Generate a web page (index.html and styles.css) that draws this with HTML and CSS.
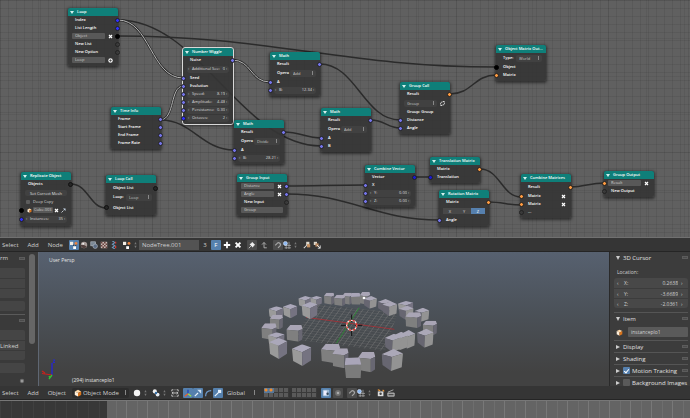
FILE: index.html
```html
<!DOCTYPE html>
<html lang="en">
<head>
<meta charset="utf-8">
<title>Node editor</title>
<link rel="stylesheet" href="styles.css">
</head>
<body>
<svg class="defs" aria-hidden="true">
  <symbol id="i-x" viewBox="0 0 10 10"><path d="M2 2l6 6M8 2l-6 6" stroke="#fff" stroke-width="2.4"/></symbol>
  <symbol id="i-plus" viewBox="0 0 10 10"><path d="M5 1v8M1 5h8" stroke="#fff" stroke-width="2.2"/></symbol>
  <symbol id="i-addc" viewBox="0 0 10 10"><circle cx="5" cy="5" r="4.5" fill="#f2f2f2"/><path d="M5 2.5v5M2.5 5h5" stroke="#333" stroke-width="1.3"/></symbol>
  <symbol id="i-cycle" viewBox="0 0 10 10"><path d="M1 6c0-3 2-4 4-4M9 4c0 3-2 4-4 4" stroke="#eee" stroke-width="1.6" fill="none"/><path d="M5 0h4v4zM5 10H1V6z" fill="#eee"/></symbol>
  <symbol id="i-cube" viewBox="0 0 10 10"><path d="M1 3l4-2 4 2-4 2z" fill="#ffdcae"/><path d="M1 3l4 2v4.500L1 7.500z" fill="#fff0dc"/><path d="M9 3L5 5v4.500l4-2z" fill="#d9741c"/></symbol>
  <symbol id="i-nodes" viewBox="0 0 10 10"><path d="M3 3l3 5M8 4L6 8" stroke="#222" stroke-width="1"/><path d="M0 1h4v4H0z" fill="#f2ede4"/><circle cx="7.500" cy="3" r="1.800" fill="#eb8440"/><path d="M4 6.500h3.500V10H4z" fill="#fff"/></symbol>
  <symbol id="i-mat" viewBox="0 0 10 10"><circle cx="5" cy="5" r="4" fill="#a89c99"/><path d="M1 5a4 4 0 0 0 7.500 2L5 5z" fill="#51403e"/><circle cx="4" cy="3.500" r="1.200" fill="#eee"/></symbol>
  <symbol id="i-comp" viewBox="0 0 10 10"><rect x="1" y="1" width="6" height="5" fill="#7a8794" stroke="#b0b8c0" stroke-width=".8"/><circle cx="6.500" cy="6.500" r="2.800" fill="#5a6c84" stroke="#b0b8c0" stroke-width=".8"/></symbol>
  <symbol id="i-tex" viewBox="0 0 10 10"><rect x="1" y="1" width="8" height="8" fill="#c9b9b4"/><path d="M1 1h2v2H1zM5 1h2v2H5zM3 3h2v2H3zM7 3h2v2H7zM1 5h2v2H1zM5 5h2v2H5zM3 7h2v2H3zM7 7h2v2H7z" fill="#68433f"/></symbol>
  <symbol id="i-anim" viewBox="0 0 10 10"><path d="M3 0l3 2-3 2 3 2-3 2 3 2" stroke="#6f9ac0" stroke-width="1.300" fill="none"/><path d="M7 1v2M7 6v3" stroke="#d63b32" stroke-width="1.600"/></symbol>
  <symbol id="i-ud" viewBox="0 0 4 10"><path d="M2 1l1.500 3h-3zM2 9L.5 6h3z" fill="#777"/></symbol>
  <symbol id="i-pin" viewBox="0 0 10 10"><path d="M1 9l3.500-3.500" stroke="#ddd" stroke-width="1"/><path d="M5 1l4 4-1.500.5-1.500 2.500-4-4 2.500-1.500z" fill="#eee"/></symbol>
  <symbol id="i-up" viewBox="0 0 10 10"><path d="M5 2v6.500h3.500M2.500 4.500L5 1.800l2.500 2.700" stroke="#aaa" stroke-width="1.200" fill="none"/></symbol>
  <symbol id="i-magnet" viewBox="0 0 10 10"><path d="M1.500 5.500L4 3a2.300 2.300 0 0 1 3.500 3L5 8.500" stroke="#a5a5a5" stroke-width="1.500" fill="none"/></symbol>
  <symbol id="i-snap" viewBox="0 0 10 10"><path d="M4 3v7M7.500 1v9M2 5.500h8M2 8.500h8" stroke="#bbb" stroke-width=".8"/><circle cx="3" cy="3" r="2.500" fill="#8cb8f2" stroke="#e5efff" stroke-width=".7"/></symbol>
  <symbol id="i-copy" viewBox="0 0 10 10"><path d="M1 9l4-4" stroke="#ddd" stroke-width="1.300"/><rect x="4" y="1" width="4" height="4" fill="#ded8cc"/><rect x="5" y="4" width="4" height="4" fill="#c28f61"/></symbol>
  <symbol id="i-paste" viewBox="0 0 10 10"><rect x="1" y="1" width="4" height="4" fill="#ded8cc"/><rect x="3" y="3" width="4" height="4" fill="#b98860"/><path d="M5 5l4 4M9 5.500V9H6" stroke="#eee" stroke-width="1.100" fill="none"/></symbol>
  <symbol id="i-ball" viewBox="0 0 10 10"><circle cx="5" cy="5" r="4" fill="#f4f4f4"/></symbol>
  <symbol id="i-pivot" viewBox="0 0 10 10"><circle cx="3.500" cy="3" r="2.600" fill="#f1f1f1"/><circle cx="7" cy="7" r="2.400" fill="#e7edf3"/><circle cx="5" cy="5" r="1.500" fill="#356ea6"/></symbol>
  <symbol id="i-frame" viewBox="0 0 10 10"><path d="M1 3V1h2M7 1h2v2M1 7v2h2M7 9h2V7M1 5h8M4.500 1h1M4.500 9h1M3 3.500L1.500 5 3 6.500M7 3.500L8.500 5 7 6.500" stroke="#ddd" stroke-width="1" fill="none"/></symbol>
  <symbol id="i-axes" viewBox="0 0 10 10"><path d="M5 1v5" stroke="#1d3fbf" stroke-width="1.600"/><path d="M5 6L1 9" stroke="#ef5a28" stroke-width="1.500"/><path d="M5 6l4 3" stroke="#9be04a" stroke-width="1.500"/></symbol>
  <symbol id="i-arrow" viewBox="0 0 10 10"><path d="M1 9l4-4" stroke="#e9f1fa" stroke-width="1.500"/><path d="M4 1h5v5z" fill="#cfe0f2"/></symbol>
  <symbol id="i-arc" viewBox="0 0 10 10"><path d="M2 9c0-4 2-7 7-7" stroke="#6f9acb" stroke-width="1.500" fill="none"/></symbol>
  <symbol id="i-scale" viewBox="0 0 10 10"><path d="M1 9l4.500-4.500" stroke="#eef5fc" stroke-width="1.500"/><rect x="5" y="1" width="4" height="4" fill="#e3eefa"/></symbol>
  <symbol id="i-lock" viewBox="0 0 10 10"><rect x="1" y="1" width="8" height="8" rx="1" fill="#9ab6cf"/><rect x="2" y="2" width="4" height="6" fill="#eef"/><circle cx="7" cy="6" r="1.500" fill="#374a5d"/></symbol>
  <symbol id="i-prop" viewBox="0 0 10 10"><circle cx="5" cy="5" r="3.600" fill="#707070"/><circle cx="5" cy="5" r="1.600" fill="#aaa"/></symbol>
  <symbol id="i-cam" viewBox="0 0 10 10"><rect x="1" y="3" width="7" height="6" fill="#ddd"/><circle cx="4.500" cy="6" r="1.500" fill="#444"/><path d="M1 1l3 1M7 1l2 2" stroke="#f39b3a" stroke-width="1.500"/></symbol>
  <symbol id="i-clap" viewBox="0 0 10 10"><path d="M1 5h8v4H1zM1 4l7-3" fill="#888" stroke="#ccc" stroke-width=".9"/><path d="M2 7h6" stroke="#333"/></symbol>
</svg>

<main class="screen">
  <section class="canvas">
    <svg class="links" aria-hidden="true">
      <g class="dark">
        <path d="M118 20C200 20 240 145 321 146"/>
        <path d="M118 36C270 36 345 67 496 67"/>
        <path d="M161 120C192 120 202 150 234 150"/>
        <path d="M284 132C300 132 306 138 321 138"/>
        <path d="M320 64C356 64 364 120 400 120"/>
        <path d="M371 120C384 120 388 128 400 128"/>
        <path d="M450 94C472 94 474 75 496 75"/>
        <path d="M71 184C88 184 90 208 106 208"/>
        <path d="M287 186C315 186 335 185 365 185"/>
        <path d="M287 194C350 194 376 220 439 220"/>
        <path d="M415 177L430 177"/>
        <path d="M480 169C500 169 502 197 521 197"/>
        <path d="M489 202C502 202 508 205 521 205"/>
        <path d="M571 187C584 187 590 183 604 183"/>
      </g>
      <g class="lit">
        <path d="M118 20C150 20 151 78 183 78"/>
        <path d="M161 120C175 118 170 87 183 86"/>
        <path d="M232 60C252 60 250 82 270 82"/>
      </g>
      <g class="core">
        <path d="M118 20C150 20 151 78 183 78"/>
        <path d="M161 120C175 118 170 87 183 86"/>
        <path d="M232 60C252 60 250 82 270 82"/>
      </g>
    </svg>

    <article class="node n-loop">
      <h2>Loop</h2>
      <div class="row">Index<i class="sock out int"></i></div>
      <div class="row">List Length<i class="sock out int"></i></div>
      <div class="row field"><input value="Object" aria-label="Object name"><button aria-label="Remove object"><svg><use href="#i-x"/></svg></button><i class="sock out obj"></i></div>
      <div class="row">New List<i class="sock out none"></i></div>
      <div class="row">New Option<i class="sock out none"></i></div>
      <div class="row field"><input value="Loop" aria-label="Loop name"><button aria-label="Add call"><svg><use href="#i-addc"/></svg></button></div>
    </article>

    <article class="node active n-wiggle">
      <h2>Number Wiggle</h2>
      <div class="row">Noise<i class="sock out num"></i></div>
      <div class="row tall"><label class="slider">Additional See:<input value="0"></label></div>
      <div class="row">Seed<i class="sock in num"></i></div>
      <div class="row">Evolution<i class="sock in num"></i></div>
      <div class="row"><label class="slider">Speed:<input value="8.19"></label><i class="sock in num"></i></div>
      <div class="row"><label class="slider">Amplitude:<input value="4.48"></label><i class="sock in num"></i></div>
      <div class="row"><label class="slider">Persistance:<input value="0.30"></label><i class="sock in num"></i></div>
      <div class="row"><label class="slider">Octaves:<input value="2"></label><i class="sock in int"></i></div>
    </article>

    <article class="node n-time">
      <h2>Time Info</h2>
      <div class="row">Frame<i class="sock out num"></i></div>
      <div class="row">Start Frame<i class="sock out num"></i></div>
      <div class="row">End Frame<i class="sock out num"></i></div>
      <div class="row">Frame Rate<i class="sock out num"></i></div>
    </article>

    <article class="node n-math1">
      <h2>Math</h2>
      <div class="row">Result<i class="sock out num"></i></div>
      <div class="row tall"><label class="pick">Opera<select><option>Add</option></select></label></div>
      <div class="row">A<i class="sock in num"></i></div>
      <div class="row"><label class="slider">B:<input value="12.34"></label><i class="sock in num"></i></div>
    </article>

    <article class="node n-math2">
      <h2>Math</h2>
      <div class="row">Result<i class="sock out num"></i></div>
      <div class="row tall"><label class="pick">Opera<select><option>Divide</option></select></label></div>
      <div class="row">A<i class="sock in num"></i></div>
      <div class="row"><label class="slider">B:<input value="28.21"></label><i class="sock in num"></i></div>
    </article>

    <article class="node n-math3">
      <h2>Math</h2>
      <div class="row">Result<i class="sock out num"></i></div>
      <div class="row tall"><label class="pick">Opera<select><option>Add</option></select></label></div>
      <div class="row">A<i class="sock in num"></i></div>
      <div class="row">B<i class="sock in num"></i></div>
    </article>

    <article class="node n-call">
      <h2>Group Call</h2>
      <div class="row">Result<i class="sock out mat"></i></div>
      <div class="row tall field"><select aria-label="Group"><option>Group</option></select><button aria-label="Refresh"><svg><use href="#i-cycle"/></svg></button></div>
      <div class="row">Group: Group</div>
      <div class="row">Distance<i class="sock in num"></i></div>
      <div class="row">Angle<i class="sock in num"></i></div>
    </article>

    <article class="node n-omo">
      <h2>Object Matrix Out...</h2>
      <div class="row tall"><label class="pick">Type:<select><option>World</option></select></label></div>
      <div class="row">Object<i class="sock in obj"></i></div>
      <div class="row">Matrix<i class="sock in mat"></i></div>
    </article>

    <article class="node n-repl">
      <h2>Replicate Object</h2>
      <div class="row">Objects<i class="sock out list"></i></div>
      <div class="row tall field"><button class="wide">Set Correct Mesh</button></div>
      <div class="row field"><label class="tick"><input type="checkbox">Deep Copy</label></div>
      <div class="row field cube"><svg><use href="#i-cube"/></svg><input value="Cube.003" aria-label="Source object"><button aria-label="Clear"><svg><use href="#i-x"/></svg></button><button aria-label="Pick"><svg><use href="#i-arrow"/></svg></button><i class="sock in obj"></i></div>
      <div class="row tall"><label class="slider">Instances:<input value="35"></label><i class="sock in int"></i></div>
    </article>

    <article class="node n-lcall">
      <h2>Loop Call</h2>
      <div class="row tall">Object List<i class="sock out list"></i></div>
      <div class="row"><label class="pick">Loop:<select><option>Loop</option></select></label></div>
      <div class="row last">Object List<i class="sock in list"></i></div>
    </article>

    <article class="node n-gin">
      <h2>Group Input</h2>
      <div class="row field"><input value="Distance" aria-label="First input"><button aria-label="Remove first input"><svg><use href="#i-x"/></svg></button><i class="sock out num"></i></div>
      <div class="row field"><input value="Angle" aria-label="Second input"><button aria-label="Remove second input"><svg><use href="#i-x"/></svg></button><i class="sock out num"></i></div>
      <div class="row">New Input<i class="sock out none"></i></div>
      <div class="row field"><input value="Group" aria-label="Group name"></div>
    </article>

    <article class="node n-cvec">
      <h2>Combine Vector</h2>
      <div class="row">Vector<i class="sock out vec"></i></div>
      <div class="row">X<i class="sock in num"></i></div>
      <div class="row"><label class="slider">Y:<input value="0.00"></label><i class="sock in num"></i></div>
      <div class="row"><label class="slider">Z:<input value="0.00"></label><i class="sock in num"></i></div>
    </article>

    <article class="node n-trans">
      <h2>Translation Matrix</h2>
      <div class="row">Matrix<i class="sock out mat"></i></div>
      <div class="row">Translation<i class="sock in vec"></i></div>
    </article>

    <article class="node n-rot">
      <h2>Rotation Matrix</h2>
      <div class="row">Matrix<i class="sock out mat"></i></div>
      <div class="row tall field axis"><button>X</button><button>Y</button><button class="on">Z</button></div>
      <div class="row">Angle<i class="sock in num"></i></div>
    </article>

    <article class="node n-cmat">
      <h2>Combine Matrices</h2>
      <div class="row tall">Result<i class="sock out mat"></i></div>
      <div class="row split">Matrix<button aria-label="Remove first matrix"><svg><use href="#i-x"/></svg></button><i class="sock in mat"></i></div>
      <div class="row split">Matrix<button aria-label="Remove second matrix"><svg><use href="#i-x"/></svg></button><i class="sock in mat"></i></div>
      <div class="row">...<i class="sock in none"></i></div>
    </article>

    <article class="node n-gout">
      <h2>Group Output</h2>
      <div class="row field"><input value="Result" aria-label="Output name"><button aria-label="Remove output"><svg><use href="#i-x"/></svg></button><i class="sock in mat"></i></div>
      <div class="row">New Output<i class="sock in none"></i></div>
    </article>
  </section>

  <header class="bar">
    <nav><button>Select</button><button>Add</button><button>Node</button></nav>
    <div class="icons">
      <button class="on" aria-label="Animation nodes"><svg><use href="#i-nodes"/></svg></button>
      <button aria-label="Material nodes"><svg><use href="#i-mat"/></svg></button>
      <button aria-label="Compositing nodes"><svg><use href="#i-comp"/></svg></button>
      <button aria-label="Texture nodes"><svg><use href="#i-tex"/></svg></button>
      <button aria-label="Sequence nodes"><svg><use href="#i-anim"/></svg></button>
    </div>
    <div class="id">
      <button class="browse" aria-label="Browse trees"><svg><use href="#i-nodes"/></svg><svg class="ud"><use href="#i-ud"/></svg></button>
      <input value="NodeTree.001" aria-label="Tree name">
      <button>3</button><button class="on">F</button>
      <button aria-label="New tree"><svg><use href="#i-plus"/></svg></button>
      <button aria-label="Unlink"><svg><use href="#i-x"/></svg></button>
    </div>
    <div class="icons tools">
      <button class="lite" aria-label="Pin"><svg><use href="#i-pin"/></svg></button>
      <button aria-label="Parent tree"><svg><use href="#i-up"/></svg></button>
    </div>
    <div class="icons">
      <button class="lite" aria-label="Snap"><svg><use href="#i-magnet"/></svg></button>
      <button class="browse" aria-label="Snap element"><svg><use href="#i-snap"/></svg><svg class="ud"><use href="#i-ud"/></svg></button>
    </div>
    <div class="icons">
      <button aria-label="Copy"><svg><use href="#i-copy"/></svg></button>
      <button aria-label="Paste"><svg><use href="#i-paste"/></svg></button>
    </div>
  </header>

  <section class="middle">
    <aside class="shelf">
      <div class="shelf-body">
        <div class="shelf-head">rm<i class="grip"></i></div>
        <div class="stack"><i></i><i></i><i></i></div>
        <div class="stack"><i></i></div>
        <div class="shelf-head second"><i class="grip"></i></div>
        <div class="stack"><i></i><i>Linked</i><i></i></div>
        <div class="stack"><i></i></div>
        <svg class="plus"><use href="#i-prop"/></svg>
      </div>
      <div class="scroll"></div>
    </aside>

    <div class="view">
      <p>User Persp</p>
      <svg class="scene" viewBox="0 0 570 134" preserveAspectRatio="xMidYMid meet" aria-hidden="true">
        <defs>
          <pattern id="floor" width="10" height="10" patternUnits="userSpaceOnUse" patternTransform="matrix(1.6 .22 -.52 .72 172 119)">
            <path d="M0 0h10M0 0v10" stroke="#7c7c7c" stroke-width="1.700" fill="none"/>
          </pattern>
          <symbol id="ca" viewBox="0 0 50 60" preserveAspectRatio="none"><path d="M0 12L26 0l24 9-24 13z" fill="#aba8ba"/><path d="M0 12l26 10 1 38L3 46z" fill="#9a9a9a"/><path d="M50 9L26 22l1 38 22-15z" fill="#757381"/></symbol>
          <symbol id="cb" viewBox="0 0 50 60" preserveAspectRatio="none"><path d="M0 17L12 0h34l4 14-14 7z" fill="#a9a5b5"/><path d="M0 17l37 4v39L2 53z" fill="#7f7f7f"/><path d="M50 14l-13 7v39l12-8z" fill="#686772"/></symbol>
          <symbol id="cc" viewBox="0 0 50 60" preserveAspectRatio="none"><path d="M3 2L44 0l6 21-50 1z" fill="#a9a5b8"/><path d="M0 22l50-1-2 39-44-1z" fill="#7b7b7b"/></symbol>
          <symbol id="cd" viewBox="0 0 50 60" preserveAspectRatio="none"><path d="M0 14L28 0l22 12-26 10z" fill="#aba8b8"/><path d="M0 14l24 8-2 38L2 44z" fill="#676671"/><path d="M50 12L24 22l-2 38 25-10z" fill="#939393"/></symbol>
        </defs>
        <g transform="translate(212 28) scale(.3333)">
          <use href="#ca" x="142" y="48" width="40" height="36"/>
          <use href="#ca" x="178" y="48" width="35" height="30"/>
          <use href="#cb" x="219" y="38" width="31" height="36"/>
          <use href="#cb" x="274" y="38" width="30" height="36"/>
          <use href="#cc" x="300" y="38" width="29" height="36"/>
          <use href="#cb" x="326" y="36" width="32" height="38"/>
          <use href="#cb" x="249" y="44" width="34" height="34"/>
          <path d="M190 72L440 98 402 213 128 178z" fill="#474b4e" fill-opacity=".4"/>
          <path d="M190 72L440 98 402 213 128 178z" fill="url(#floor)"/>
          <path d="M165 112l265 36" stroke="#a32d33" stroke-width="2.500"/>
          <path d="M325 83l-69 107" stroke="#2b9233" stroke-width="2.500"/>
          <use href="#cd" x="338" y="48" width="40" height="38"/>
          <use href="#cd" x="380" y="57" width="42" height="38"/>
          <use href="#cd" x="394" y="64" width="45" height="44"/>
          <use href="#ca" x="441" y="63" width="46" height="36"/>
          <use href="#cd" x="444" y="77" width="44" height="42"/>
          <use href="#cd" x="491" y="83" width="44" height="42"/>
          <use href="#cb" x="463" y="97" width="48" height="47"/>
          <use href="#cb" x="515" y="122" width="43" height="44"/>
          <use href="#ca" x="152" y="66" width="48" height="52"/>
          <use href="#ca" x="96" y="72" width="43" height="43"/>
          <use href="#ca" x="53" y="79" width="44" height="40"/>
          <use href="#cb" x="56" y="104" width="40" height="44"/>
          <use href="#cb" x="31" y="130" width="46" height="50"/>
          <use href="#cb" x="106" y="135" width="49" height="50"/>
          <use href="#ca" x="51" y="157" width="50" height="44"/>
          <use href="#ca" x="54" y="174" width="55" height="63"/>
          <use href="#ca" x="123" y="193" width="58" height="65"/>
          <use href="#cd" x="498" y="146" width="50" height="57"/>
          <use href="#cd" x="448" y="150" width="45" height="56"/>
          <use href="#cd" x="424" y="155" width="48" height="56"/>
          <use href="#cd" x="401" y="161" width="50" height="55"/>
          <use href="#cd" x="392" y="207" width="64" height="66"/>
          <use href="#cb" x="210" y="192" width="58" height="58"/>
          <use href="#cb" x="244" y="205" width="49" height="60"/>
          <use href="#cb" x="321" y="216" width="52" height="61"/>
          <use href="#cc" x="281" y="232" width="50" height="63"/>
          <path d="M302 104v22M302 146v22M270 136h22M312 136h22" stroke="#111" stroke-width="3"/>
          <circle cx="302" cy="136" r="15" fill="none" stroke="#f1f1f1" stroke-width="4"/>
          <circle cx="302" cy="136" r="15" fill="none" stroke="#e0332c" stroke-width="4" stroke-dasharray="7 5"/>
          <circle cx="339" cy="54" r="4" fill="#fff"/>
        </g>
        <path d="M13 123V111" stroke="#2426d8" stroke-width="1.300"/>
        <path d="M13 123L3 121.500M3 119l3 2" stroke="#c9211d" stroke-width="1.200"/>
        <path d="M13 123l-3 4M10 124l1 2" stroke="#30c431" stroke-width="1.300"/>
        <path d="M14 108h2l-2 2.500h2" stroke="#2426d8" stroke-width=".9" fill="none"/>
      </svg>
      <p class="foot">(294) instanceplo1</p>
    </div>

    <aside class="props">
      <section>
        <h3 class="open">3D Cursor<i class="grip"></i></h3>
        <p>Location:</p>
        <div class="coords">
          <label>X:<input value="0.2638"></label>
          <label>Y:<input value="-3.6689"></label>
          <label>Z:<input value="-2.0361"></label>
        </div>
      </section>
      <section>
        <h3 class="open">Item<i class="grip"></i></h3>
        <div class="item"><svg><use href="#i-cube"/></svg><input value="instanceplo1" aria-label="Item name"></div>
      </section>
      <section><h3>Display<i class="grip"></i></h3></section>
      <section><h3>Shading<i class="grip"></i></h3></section>
      <section><h3><label><input type="checkbox" checked>Motion Tracking</label><i class="grip"></i></h3></section>
      <section><h3><label><input type="checkbox">Background Images</label></h3></section>
    </aside>
  </section>

  <header class="bar lower">
    <nav><button>Select</button><button>Add</button><button>Object</button></nav>
    <label class="mode"><svg><use href="#i-cube"/></svg><select aria-label="Mode"><option>Object Mode</option></select></label>
    <div class="icons spaced">
      <button class="browse" aria-label="Shading"><svg><use href="#i-ball"/></svg><svg class="ud"><use href="#i-ud"/></svg></button>
      <button class="browse" aria-label="Pivot"><svg><use href="#i-pivot"/></svg><svg class="ud"><use href="#i-ud"/></svg></button>
    </div>
    <button aria-label="Centers only"><svg><use href="#i-frame"/></svg></button>
    <div class="icons">
      <button class="on" aria-label="Manipulator"><svg><use href="#i-axes"/></svg></button>
      <button class="on" aria-label="Translate"><svg><use href="#i-arrow"/></svg></button>
      <button aria-label="Rotate"><svg><use href="#i-arc"/></svg></button>
      <button class="on" aria-label="Scale"><svg><use href="#i-scale"/></svg></button>
      <select aria-label="Orientation"><option>Global</option></select>
    </div>
    <div class="layers"><i class="used"></i><i></i></div>
    <div class="icons tools">
      <button class="on" aria-label="Lock camera"><svg><use href="#i-lock"/></svg></button>
      <button class="lite" aria-label="Proportional edit"><svg><use href="#i-prop"/></svg></button>
    </div>
    <div class="icons">
      <button class="lite" aria-label="Snap"><svg><use href="#i-magnet"/></svg></button>
      <button class="browse" aria-label="Snap element"><svg><use href="#i-snap"/></svg><svg class="ud"><use href="#i-ud"/></svg></button>
    </div>
    <div class="icons">
      <button aria-label="Render still"><svg><use href="#i-cam"/></svg></button>
      <button aria-label="Render animation"><svg><use href="#i-clap"/></svg></button>
    </div>
  </header>
  <section class="timeline"><div class="before"></div></section>
</main>
</body>
</html>
```
FILE: styles.css
```css
* { box-sizing: border-box; }
body {
  margin: 0;
  background: #303030;
  color: #d0d0d0;
  font: 6px/8px "Open Sans", "Noto Sans", sans-serif;
}
h2, h3, p { margin: 0; font: inherit; }
i { font-style: normal; }
button, input, select {
  margin: 0; padding: 0; border: 0; background: none;
  color: inherit; font: inherit; appearance: none; min-width: 0;
}
.defs { position: absolute; width: 0; height: 0; }

.screen {
  display: grid;
  grid-template-rows: 1fr auto auto auto 18px;
  min-height: 100vh;
}

/* node canvas */
.canvas {
  position: relative;
  overflow: hidden;
  border-bottom: 1px solid #707070;
  background:
    repeating-linear-gradient(90deg, #0000000f 0 1px, transparent 1px 38px),
    repeating-linear-gradient(#0000000f 0 1px, transparent 1px 38px),
    repeating-linear-gradient(90deg, #00000012 0 1px, transparent 1px 8px),
    repeating-linear-gradient(#00000012 0 1px, transparent 1px 8px),
    #606060;
}
.links { position: absolute; inset: 0; width: 100%; height: 100%; fill: none; }
.dark { stroke: #2b2b2b; stroke-width: 1.5; }
.lit { stroke: #2b2b2b; stroke-width: 2.4; }
.core { stroke: #b5b5b5; stroke-width: 1; }

.node {
  position: absolute;
  width: 50px;
  padding-bottom: 2px;
  border-radius: 2px;
  background: #353535e8;
  box-shadow: 0 1px 3px 1px #00000080;
  color: #fff;
  font-size: 4px;
  font-weight: 600;
  line-height: 8px;
}
.node.active { outline: 1px solid #d8d8d8; }
.node h2 {
  display: flex;
  align-items: center;
  gap: 3px;
  height: 8px;
  padding-left: 2px;
  border-radius: 2px 2px 0 0;
  background: #0f7f79;
  white-space: nowrap;
}
.node h2::before {
  content: "";
  border: 2px solid transparent;
  border-top: 3px solid #d5f0ee;
  border-bottom: 0;
}
.row {
  position: relative;
  display: flex;
  align-items: center;
  height: 8px;
  padding: 0 4px 0 7px;
}
.row.tall { height: 10px; }
.row.last { height: 12px; padding-top: 2px; }
.row:has(.slider), .row.field { padding-left: 4px; }
.row svg { display: block; width: 5px; height: 5px; }
.field { gap: 2px; }
.row input, .row select, .slider, .tick, .wide, .axis { font-weight: 400; }
.field > input {
  flex: 1;
  height: 6px;
  padding-left: 3px;
  border-radius: 1px;
  background: #585858;
  color: #cfcfcf;
}
.field > button, .split > button {
  display: grid;
  place-items: center;
  width: 7px;
  height: 6px;
}
.field > button.wide { flex: 1; border-radius: 2px; background: #414141; color: #e0e0e0; }
.split { justify-content: space-between; }
.slider {
  display: flex;
  flex: 1;
  align-items: center;
  height: 7px;
  border-radius: 3px;
  background: #414141;
  color: #dcdcdc;
  white-space: nowrap;
}
.slider::before { content: "‹"; width: 4px; padding-left: 1px; }
.slider::after { content: "›"; width: 3px; padding-left: 1px; }
.slider input { flex: 1; width: 0; text-align: right; }
.pick { display: flex; flex: 1; align-items: center; justify-content: space-between; white-space: nowrap; }
.node select {
  width: 26px;
  height: 7px;
  padding-left: 3px;
  border-radius: 2px;
  background: linear-gradient(#888, #888) right 3px center / 1px 4px no-repeat, #414141;
  color: #c4c4c4;
}
.field > select { flex: 1; }
.tick { display: flex; align-items: center; gap: 3px; padding-left: 1px; color: #d8d8d8; }
.tick input { width: 4px; height: 4px; border-radius: 1px; background: #5c5c5c; }
.row.cube { gap: 0; }
.cube > svg { margin: 0 1px 0 2px; }
.cube > input { padding-left: 1px; }
.row.axis { gap: 0; }
.axis > button { flex: 1; background: #484848; color: #d0d0d0; }
.axis > button.on { background: #5680ae; color: #fff; }

.sock {
  position: absolute;
  top: 50%;
  width: 5px;
  height: 5px;
  margin-top: -2px;
  border: 1px solid #222;
  border-radius: 50%;
}
.in { left: -2px; }
.out { right: -2px; }
.num { background: #7474ea; }
.int { background: #2f2fff; }
.vec { background: #1a1ad0; }
.mat { background: #ff9b40; }
.obj { background: #000; border-color: #000; }
.list { background: #262626; border-color: #111; }

.n-loop { left: 68px; top: 8px; }
.n-wiggle { left: 183px; top: 48px; }
.n-time { left: 111px; top: 107px; }
.n-math1 { left: 270px; top: 52px; }
.n-math2 { left: 234px; top: 120px; }
.n-math3 { left: 321px; top: 108px; }
.n-call { left: 400px; top: 82px; }
.n-omo { left: 496px; top: 45px; }
.n-repl { left: 21px; top: 172px; }
.n-lcall { left: 106px; top: 175px; }
.n-gin { left: 237px; top: 174px; }
.n-cvec { left: 365px; top: 165px; }
.n-trans { left: 430px; top: 157px; }
.n-rot { left: 439px; top: 190px; }
.n-cmat { left: 521px; top: 174px; }
.n-gout { left: 604px; top: 171px; }

/* editor headers */
.bar {
  display: flex;
  align-items: center;
  gap: 4px;
  height: 14px;
  padding: 0 2px;
  border-bottom: 1px solid #252525;
  background: #353535;
}
.bar nav { display: flex; gap: 9px; margin-right: 2px; }
.bar svg { display: block; width: 8px; height: 8px; }
.bar svg.ud { width: 3px; }
.bar button { white-space: nowrap; }
.icons, .id { display: flex; align-items: center; }
.id { gap: 1px; }
.bar .icons button, .id button {
  display: flex;
  align-items: center;
  justify-content: center;
  width: 10px;
  height: 10px;
  border-radius: 1px;
}
.bar button.browse { width: 15px; gap: 3px; }
.bar button.on { background: #5580ad; color: #fff; }
.bar button.lite { background: #4c4c4c; }
.tools { gap: 2px; }
.spaced { gap: 4px; }
.id input { width: 60px; height: 10px; padding-left: 3px; background: #535353; }
.mode { display: flex; align-items: center; gap: 1px; width: 57px; padding-left: 2px; border-radius: 2px; background: #2c2c2c; }
.mode select { flex: 1; height: 10px; background: linear-gradient(#888, #888) right 3px center / 1px 5px no-repeat; }
.icons > select { width: 37px; height: 10px; padding-left: 4px; background: linear-gradient(#888, #888) right 5px center / 1px 5px no-repeat; }
.layers { display: flex; gap: 3px; }
.layers i {
  width: 25px;
  height: 10px;
  background:
    repeating-linear-gradient(90deg, transparent 0 4px, #3a3a3a 4px 5px),
    repeating-linear-gradient(transparent 0 4px, #3a3a3a 4px 5px),
    #5a5a5a;
}
.layers .used {
  background:
    radial-gradient(circle at 2px 2px, #f08c2c 1px, transparent 2px),
    radial-gradient(circle at 7px 2px, #f08c2c 1px, transparent 2px),
    linear-gradient(#56789b, #56789b) 0 0 / 10px 5px no-repeat,
    repeating-linear-gradient(90deg, transparent 0 4px, #3a3a3a 4px 5px),
    repeating-linear-gradient(transparent 0 4px, #3a3a3a 4px 5px),
    #5a5a5a;
}

/* 3D view row */
.middle { display: grid; grid-template-columns: 38px 1fr 81px; height: 134px; }
.grip { width: 6px; height: 3px; border: 1px solid #5c5c5c; background: #4c4c4c; }
.shelf { display: flex; gap: 4px; padding-right: 3px; background: #3a3a3a; overflow: hidden; }
.shelf-body { flex: 1; }
.shelf-head { display: flex; align-items: center; justify-content: space-between; height: 12px; margin-bottom: 4px; }
.shelf-head.second { justify-content: flex-end; margin-top: 3px; border-top: 1px solid #5a5a5a; }
.stack { margin-bottom: 3px; border-radius: 0 2px 2px 0; background: #454545; }
.stack i { display: block; height: 10px; line-height: 10px; }
.stack i + i { border-top: 1px solid #3a3a3a; }
.plus { display: block; width: 6px; height: 6px; margin: 5px 0 0 auto; }
.scroll { width: 6px; height: 90px; margin-top: 2px; border-radius: 3px; background: #666; }
.view {
  position: relative;
  display: flex;
  flex-direction: column;
  justify-content: space-between;
  padding: 4px 10px 2px;
  border-left: 1px solid #5f6773;
  background: linear-gradient(#576170, #4b5158 45%, #424242 90%);
  color: #e4e4e4;
  font-size: 5px;
}
.scene { position: absolute; inset: 0; width: 100%; height: 100%; }
.view .foot { padding-left: 23px; }

.props { padding: 0 2px 0 4px; border-left: 1px solid #2a2a2a; background: #3c3c3c; overflow: hidden; }
.props section { border-bottom: 1px solid #555; }
.props section:last-child { border-bottom: 0; }
.props h3 { display: flex; align-items: center; gap: 3px; height: 11px; padding-left: 2px; white-space: nowrap; color: #e0e0e0; }
.props h3::before { content: ""; border: 2px solid transparent; border-left: 4px solid #ccc; border-right: 0; }
.props h3.open::before { border: 2px solid transparent; border-top: 4px solid #ccc; border-bottom: 0; }
.props .grip { margin-left: auto; }
.props p { padding: 5px 0 2px 3px; font-size: 5px; }
.coords { margin-bottom: 4px; border-radius: 3px; background: #484848; font-size: 5px; overflow: hidden; }
.coords label { display: flex; align-items: center; height: 10px; }
.coords label + label { border-top: 1px solid #3c3c3c; }
.coords label::before { content: "‹"; width: 7px; padding-left: 3px; }
.coords label::after { content: "›"; width: 7px; padding-left: 3px; }
.coords input { flex: 1; width: 0; text-align: right; }
.item { display: flex; align-items: center; gap: 5px; padding: 3px 0 3px 2px; }
.item svg { width: 7px; height: 7px; }
.item input { flex: 1; height: 10px; padding-left: 3px; border-radius: 1px; background: #5a5a5a; font-size: 5px; }
.props h3 label { display: flex; align-items: center; gap: 2px; }
.props h3 input { display: grid; place-items: center; width: 7px; height: 7px; border-radius: 1px; background: #5a5a5a; }
.props h3 input:checked { background: #5680ae; }
.props h3 input:checked::before { content: ""; width: 2px; height: 4px; border: solid #fff; border-width: 0 1px 1px 0; transform: rotate(40deg); }

/* timeline */
.timeline {
  background: repeating-linear-gradient(90deg, #787878 0 1px, #646464 1px 11px, #6e6e6e 11px 12px, #646464 12px 21px);
  border-top: 1px solid #777;
}
.before { width: 107px; height: 100%; background: repeating-linear-gradient(90deg, #404040 0 1px, #383838 1px 11px); }
```
